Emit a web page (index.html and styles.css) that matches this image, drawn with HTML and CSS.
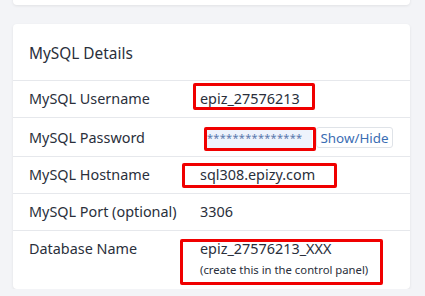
FILE: index.html
```html
<!DOCTYPE html>
<html lang="en">
  <head>
    <meta charset="UTF-8" />
    <meta name="viewport" content="width=device-width, initial-scale=1.0" />
    <title>MySQL Details</title>
    <link rel="stylesheet" href="styles.css">
  </head>
  <body>
    <div class="page">
      <div class="card card-top"></div>

      <div class="card">
        <div class="card-header">MySQL Details</div>

        <div class="row">
          <div class="label">MySQL Username</div>
          <div class="value">
            epiz_27576213
            <span class="mark mark-user"></span>
          </div>
        </div>

        <div class="row row-pass">
          <div class="label">MySQL Password</div>
          <div class="value">
            <div class="pass-group">
              <div class="pass-input">***************</div>
              <button class="pass-btn">Show/Hide</button>
            </div>
            <span class="mark mark-pass"></span>
          </div>
        </div>

        <div class="row">
          <div class="label">MySQL Hostname</div>
          <div class="value">
            sql308.epizy.com
            <span class="mark mark-host"></span>
          </div>
        </div>

        <div class="row">
          <div class="label">MySQL Port (optional)</div>
          <div class="value">3306</div>
        </div>

        <div class="row">
          <div class="label">Database Name</div>
          <div class="value">
            epiz_27576213_XXX
            <div class="hint">(create this in the control panel)</div>
            <span class="mark mark-db"></span>
          </div>
        </div>
      </div>
    </div>
  </body>
</html>
```

FILE: styles.css
```css
* {
  box-sizing: border-box;
  margin: 0;
  padding: 0;
}

body {
  font-family: "Noto Sans", "Open Sans", sans-serif;
  background-color: #f3f4f7;
  color: #2a2f3b;
  font-size: 14.4px;
}

.page {
  padding: 0 15px 0 13px;
}

.card {
  background-color: #ffffff;
  border-radius: 4px;
  box-shadow: 0 1px 3px rgba(0, 0, 0, 0.08);
}

.card-top {
  height: 20px;
  margin-top: -15px;
  margin-bottom: 19px;
}

.card-header {
  padding: 18px 16px 14px;
  font-size: 15.4px;
  line-height: 24px;
  color: #2a2f3b;
}

.row {
  display: grid;
  grid-template-columns: 171px 1fr;
  padding: 8px 16px;
  line-height: 20px;
  border-top: 1px solid #e6e8ec;
}

.row-pass {
  padding: 9px 16px 8px;
}

.row-pass .label {
  line-height: 21px;
}

.value {
  position: relative;
}

.hint {
  font-size: 11.3px;
  line-height: 22px;
}

.pass-group {
  display: flex;
  align-items: stretch;
  height: 21px;
}

.pass-input {
  width: 106px;
  margin-left: 6px;
  padding-left: 1px;
  background-color: #eef3fc;
  color: #5a78ad;
  font-size: 11px;
  line-height: 21px;
  letter-spacing: 0.3px;
}

.pass-btn {
  margin-left: 4px;
  width: 77px;
  border: 1px solid #dfe3e8;
  border-radius: 3px;
  background-color: #ffffff;
  color: #3a6db3;
  font-family: inherit;
  font-size: 13.4px;
}

/* red annotation boxes drawn over the values */
.mark {
  position: absolute;
  border: 3px solid #f00000;
  border-radius: 2px;
}

.mark-user {
  left: -7px;
  top: -6px;
  width: 122px;
  height: 27px;
}

.mark-pass {
  left: 4px;
  top: 0px;
  width: 112px;
  height: 24px;
}

.mark-host {
  left: -18px;
  top: -2px;
  width: 155px;
  height: 25px;
}

.mark-db {
  left: -20px;
  top: 0px;
  width: 203px;
  height: 46px;
}
```
